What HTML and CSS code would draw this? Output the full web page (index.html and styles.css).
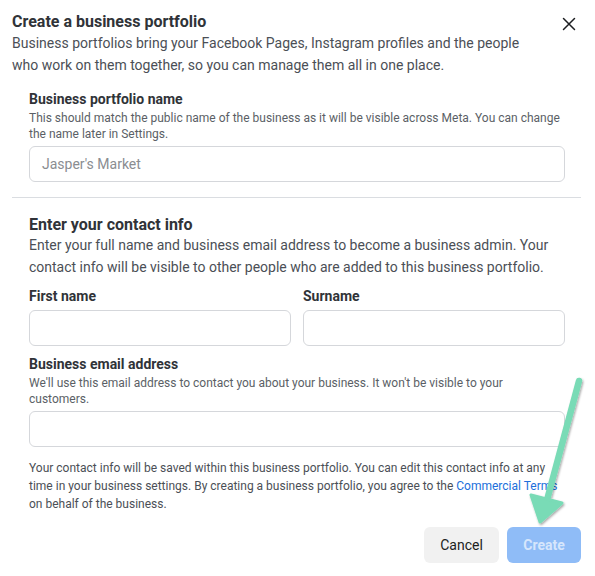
FILE: index.html
```html
<!DOCTYPE html>
<html lang="en">
<head>
<meta charset="utf-8">
<title>Create a business portfolio</title>
<link rel="stylesheet" href="styles.css">
</head>
<body>
<div class="dialog">
  <header class="header">
    <div class="header-text">
      <h1 class="title">Create a business portfolio</h1>
      <p class="subtitle">Business portfolios bring your Facebook Pages, Instagram profiles and the people who work on them together, so you can manage them all in one place.</p>
    </div>
    <button class="close" aria-label="Close">
      <svg width="14" height="14" viewBox="0 0 14 14"><path d="M1.5 1.5 L12.5 12.5 M12.5 1.5 L1.5 12.5" stroke="#1c1e21" stroke-width="1.5" stroke-linecap="round" fill="none"/></svg>
    </button>
  </header>

  <section class="section first">
    <label class="label">Business portfolio name</label>
    <p class="helper">This should match the public name of the business as it will be visible across Meta. You can change the name later in Settings.</p>
    <div class="input"><span class="placeholder">Jasper's Market</span></div>
  </section>

  <hr class="divider">

  <section class="section">
    <h2 class="heading">Enter your contact info</h2>
    <p class="body">Enter your full name and business email address to become a business admin. Your contact info will be visible to other people who are added to this business portfolio.</p>
    <div class="row">
      <div class="field">
        <label class="label">First name</label>
        <div class="input name-input"></div>
      </div>
      <div class="field">
        <label class="label">Surname</label>
        <div class="input name-input"></div>
      </div>
    </div>
    <label class="label email-label">Business email address</label>
    <p class="helper">We'll use this email address to contact you about your business. It won't be visible to your customers.</p>
    <div class="input"></div>
    <p class="note">Your contact info will be saved within this business portfolio. You can edit this contact info at any time in your business settings. By creating a business portfolio, you agree to the <a class="link" href="#">Commercial Terms</a> on behalf of the business.</p>
  </section>

  <footer class="footer">
    <button class="btn cancel">Cancel</button>
    <button class="btn create">Create</button>
  </footer>
</div>

<svg class="arrow" width="595" height="576" viewBox="0 0 595 576">
  <defs>
    <filter id="sh" x="-20%" y="-20%" width="140%" height="140%">
      <feDropShadow dx="1" dy="1.5" stdDeviation="1.2" flood-color="#000" flood-opacity="0.35"/>
    </filter>
  </defs>
  <g filter="url(#sh)" fill="#79dbb6" stroke="#79dbb6" stroke-linejoin="round" stroke-linecap="round">
    <line x1="579" y1="381" x2="547" y2="500" stroke-width="6.5"/>
    <polygon points="531,495 562,503 540,522" stroke-width="3"/>
  </g>
</svg>
</body>
</html>
```

FILE: styles.css
```css
* { box-sizing: border-box; }

html, body {
  margin: 0;
  padding: 0;
  background: #ffffff;
}

body {
  font-family: Roboto, "Liberation Sans", Arial, sans-serif;
  color: #444950;
  width: 595px;
  height: 576px;
  overflow: hidden;
  position: relative;
}

.dialog {
  padding: 13px 14px 0 12px;
  display: flex;
  flex-direction: column;
}

.header {
  display: flex;
  align-items: flex-start;
  justify-content: space-between;
}

.header-text {
  max-width: 525px;
}

.title {
  margin: 0;
  font-size: 16px;
  line-height: 18px;
  font-weight: 700;
  color: #303338;
}

.subtitle {
  margin: 1px 0 0;
  font-size: 14px;
  line-height: 22px;
  color: #4b4f56;
}

.close {
  border: 0;
  background: none;
  padding: 0;
  margin: 4px 5px 0 0;
  width: 14px;
  height: 14px;
  display: flex;
  cursor: pointer;
}

.section {
  padding: 0 16px 0 17px;
  display: flex;
  flex-direction: column;
}

.section.first {
  margin-top: 14px;
}

.label {
  display: block;
  font-size: 14px;
  line-height: 18px;
  font-weight: 700;
  color: #303338;
}

.helper {
  margin: 2px 0 0;
  max-width: 533px;
  font-size: 12px;
  line-height: 16px;
  color: #5b5f66;
}

.input {
  margin-top: 4px;
  height: 36px;
  border: 1px solid #d5d7db;
  border-radius: 6px;
  background: #fff;
  display: flex;
  align-items: center;
  padding: 0 12px;
}

.placeholder {
  font-size: 14px;
  color: #8a8d91;
}

.divider {
  border: 0;
  border-top: 1px solid #dadde1;
  margin: 15px 0 0;
  height: 0;
}

.heading {
  margin: 18px 0 0;
  font-size: 16px;
  line-height: 18px;
  font-weight: 700;
  color: #303338;
}

.body {
  margin: 0;
  font-size: 14px;
  line-height: 22px;
  color: #4b4f56;
}

.row {
  margin-top: 9px;
  display: grid;
  grid-template-columns: 1fr 1fr;
  gap: 12px;
}

.field {
  display: flex;
  flex-direction: column;
}

.name-input {
  margin-top: 5px;
}

.email-label {
  margin-top: 9px;
}

.note {
  margin: 12px 0 0;
  font-size: 12px;
  line-height: 18px;
  color: #4b4f56;
}

.link {
  color: #216fdb;
  text-decoration: none;
}

.footer {
  margin-top: 14px;
  display: flex;
  justify-content: flex-end;
  gap: 8px;
}

.btn {
  height: 36px;
  border: 0;
  border-radius: 6px;
  font-family: Roboto, "Liberation Sans", Arial, sans-serif;
  font-size: 14px;
  padding: 0 16px;
  cursor: pointer;
}

.cancel {
  width: 75px;
  background: #f1f1f1;
  color: #1c1e21;
  font-weight: 400;
}

.create {
  width: 74px;
  background: #8fbcf7;
  color: #d6e6fc;
  font-weight: 700;
}

.arrow {
  position: absolute;
  top: 0;
  left: 0;
  pointer-events: none;
}
```
